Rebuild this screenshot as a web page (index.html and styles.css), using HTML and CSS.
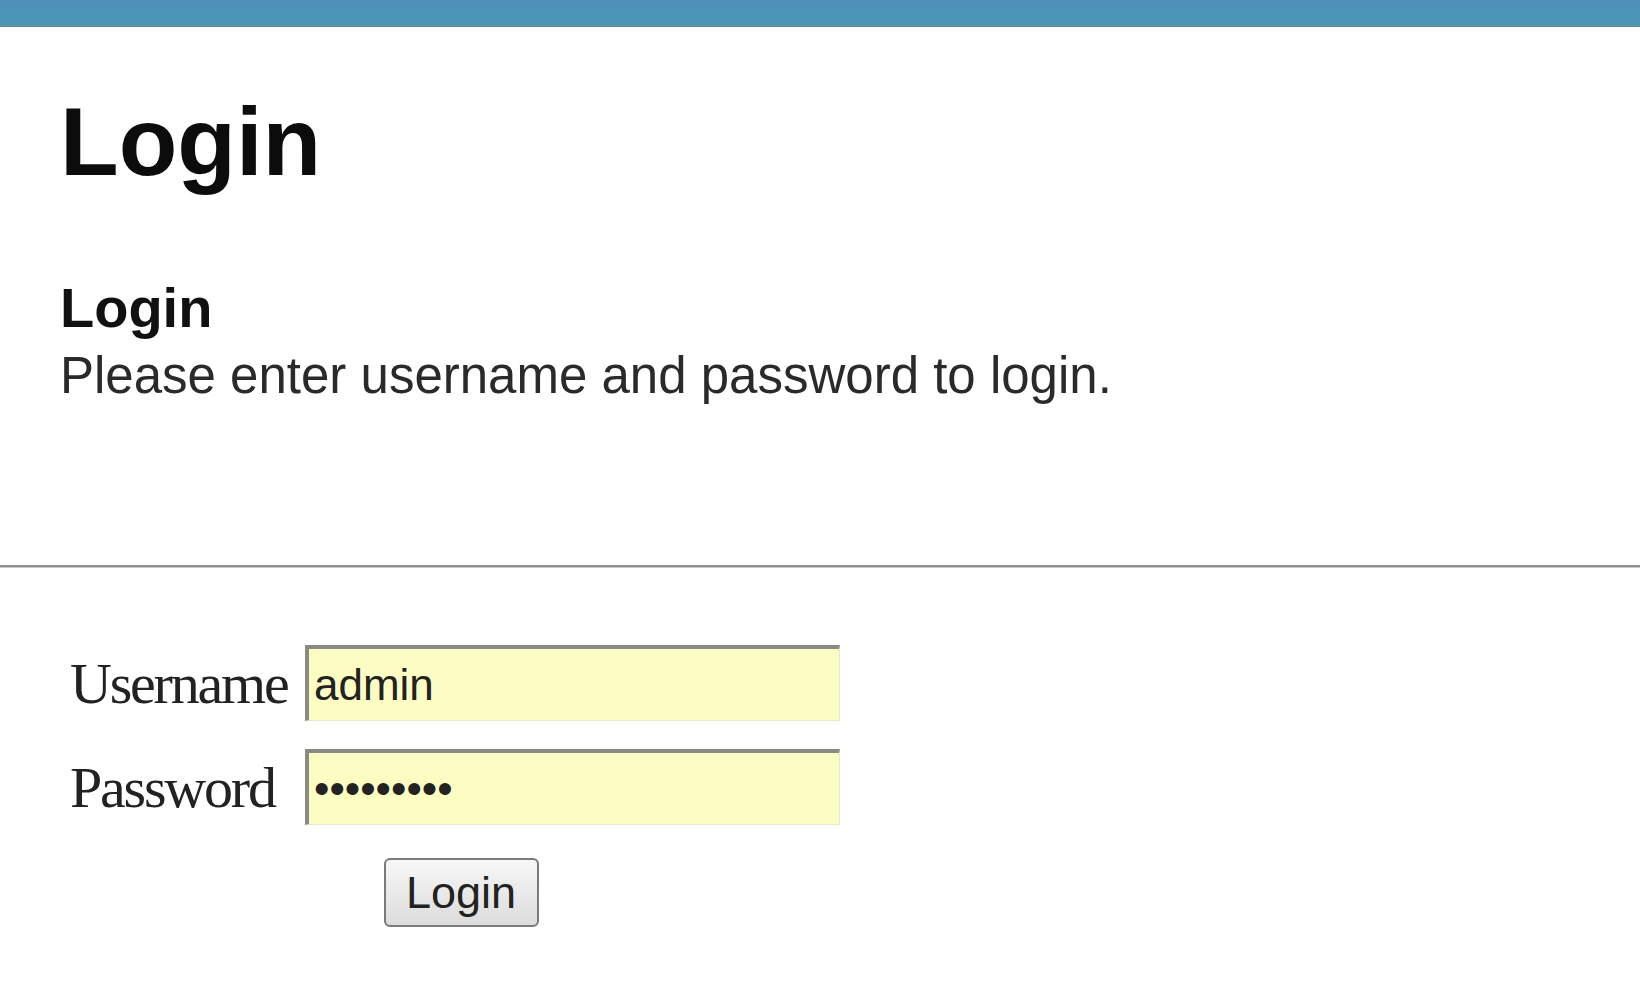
FILE: index.html
```html
<!DOCTYPE html>
<html lang="en">
<head>
    <meta charset="UTF-8">
    <meta name="viewport" content="width=device-width, initial-scale=1.0">
    <title>Login</title>
    <link rel="stylesheet" href="styles.css">
</head>
<body>
    <div class="topbar"></div>

    <div class="content">
        <h1 class="page-title">Login</h1>
        <h3 class="box-title">Login</h3>
        <p class="box-intro">Please enter username and password to login.</p>
    </div>

    <hr class="divider">

    <form class="login-form" action="login.php" method="POST">
        <label for="username">Username</label>
        <input type="text" id="username" name="username" value="admin">

        <label for="password">Password</label>
        <input type="password" id="password" name="password" value="123456789">

        <button type="submit">Login</button>
    </form>
</body>
</html>
```

FILE: styles.css
```css
body {
    margin: 0;
    padding: 0;
    background-color: #fff;
    font-family: "Liberation Sans", Arial, sans-serif;
    color: #111;
}

.topbar {
    height: 25px;
    background: linear-gradient(#4f8fbb, #4899b3);
    border-bottom: 2px solid #5f8f9a;
}

.content {
    padding-left: 60px;
}

.page-title {
    margin: 67px 0 0 0;
    font-size: 96px;
    line-height: 1;
    font-weight: bold;
    color: #0c0c0c;
}

.box-title {
    margin: 90px 0 0 0;
    font-size: 56px;
    line-height: 1;
    font-weight: bold;
    color: #111;
}

.box-intro {
    margin: 14px 0 0 0;
    font-size: 51px;
    line-height: 1;
    color: #2a2a2a;
}

.divider {
    margin: 164px 0 0 0;
    height: 0;
    border: none;
    border-top: 2px solid #8f8f8f;
    border-bottom: 1px solid #c8c8c8;
}

.login-form {
    margin-top: 77px;
    padding-left: 70px;
    display: grid;
    grid-template-columns: 235px 535px;
    row-gap: 28px;
    align-items: center;
}

.login-form label {
    font-family: "Liberation Serif", "Times New Roman", serif;
    font-size: 58px;
    letter-spacing: -2.2px;
    color: #222;
}

.login-form input {
    box-sizing: border-box;
    width: 535px;
    height: 76px;
    margin: 0;
    padding: 0 0 0 5px;
    border-top: 4px solid #8a8a82;
    border-left: 4px solid #8a8a82;
    border-right: 1px solid #e8e8cc;
    border-bottom: 1px solid #e8e8cc;
    background-color: #fbfdc2;
    font-family: "Liberation Sans", Arial, sans-serif;
    font-size: 44px;
    color: #222;
    outline: none;
}

.login-form button {
    grid-column: 1 / -1;
    justify-self: center;
    width: 155px;
    height: 69px;
    margin: 5px 0 0 12px;
    padding: 0;
    border: 2px solid #7a7a7a;
    border-radius: 6px;
    background: linear-gradient(#f7f7f7, #dcdcdc);
    font-family: "Liberation Sans", Arial, sans-serif;
    font-size: 45px;
    color: #222;
    cursor: pointer;
}
```
